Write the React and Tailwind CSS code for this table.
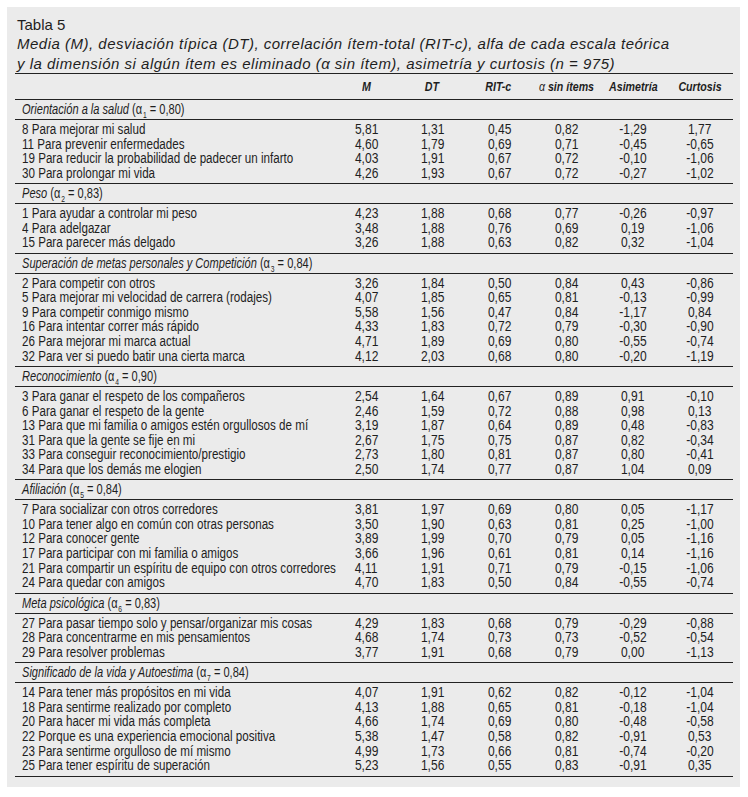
import React from "react";

const sections = [
  {
    name: "Orientación a la salud",
    sub: "1",
    alpha: "0,80",
    rows: [
      ["8 Para mejorar mi salud", "5,81", "1,31", "0,45", "0,82", "-1,29", "1,77"],
      ["11 Para prevenir enfermedades", "4,60", "1,79", "0,69", "0,71", "-0,45", "-0,65"],
      ["19 Para reducir la probabilidad de padecer un infarto", "4,03", "1,91", "0,67", "0,72", "-0,10", "-1,06"],
      ["30 Para prolongar mi vida", "4,26", "1,93", "0,67", "0,72", "-0,27", "-1,02"],
    ],
  },
  {
    name: "Peso",
    sub: "2",
    alpha: "0,83",
    rows: [
      ["1 Para ayudar a controlar mi peso", "4,23", "1,88", "0,68", "0,77", "-0,26", "-0,97"],
      ["4 Para adelgazar", "3,48", "1,88", "0,76", "0,69", "0,19", "-1,06"],
      ["15 Para parecer más delgado", "3,26", "1,88", "0,63", "0,82", "0,32", "-1,04"],
    ],
  },
  {
    name: "Superación de metas personales y Competición",
    sub: "3",
    alpha: "0,84",
    rows: [
      ["2 Para competir con otros", "3,26", "1,84", "0,50", "0,84", "0,43", "-0,86"],
      ["5 Para mejorar mi velocidad de carrera (rodajes)", "4,07", "1,85", "0,65", "0,81", "-0,13", "-0,99"],
      ["9 Para competir conmigo mismo", "5,58", "1,56", "0,47", "0,84", "-1,17", "0,84"],
      ["16 Para intentar correr más rápido", "4,33", "1,83", "0,72", "0,79", "-0,30", "-0,90"],
      ["26 Para mejorar mi marca actual", "4,71", "1,89", "0,69", "0,80", "-0,55", "-0,74"],
      ["32 Para ver si puedo batir una cierta marca", "4,12", "2,03", "0,68", "0,80", "-0,20", "-1,19"],
    ],
  },
  {
    name: "Reconocimiento",
    sub: "4",
    alpha: "0,90",
    rows: [
      ["3 Para ganar el respeto de los compañeros", "2,54", "1,64", "0,67", "0,89", "0,91", "-0,10"],
      ["6 Para ganar el respeto de la gente", "2,46", "1,59", "0,72", "0,88", "0,98", "0,13"],
      ["13 Para que mi familia o amigos estén orgullosos de mí", "3,19", "1,87", "0,64", "0,89", "0,48", "-0,83"],
      ["31 Para que la gente se fije en mi", "2,67", "1,75", "0,75", "0,87", "0,82", "-0,34"],
      ["33 Para conseguir reconocimiento/prestigio", "2,73", "1,80", "0,81", "0,87", "0,80", "-0,41"],
      ["34 Para que los demás me elogien", "2,50", "1,74", "0,77", "0,87", "1,04", "0,09"],
    ],
  },
  {
    name: "Afiliación",
    sub: "5",
    alpha: "0,84",
    rows: [
      ["7 Para socializar con otros corredores", "3,81", "1,97", "0,69", "0,80", "0,05", "-1,17"],
      ["10 Para tener algo en común con otras personas", "3,50", "1,90", "0,63", "0,81", "0,25", "-1,00"],
      ["12 Para conocer gente", "3,89", "1,99", "0,70", "0,79", "0,05", "-1,16"],
      ["17 Para participar con mi familia o amigos", "3,66", "1,96", "0,61", "0,81", "0,14", "-1,16"],
      ["21 Para compartir un espíritu de equipo con otros corredores", "4,11", "1,91", "0,71", "0,79", "-0,15", "-1,06"],
      ["24 Para quedar con amigos", "4,70", "1,83", "0,50", "0,84", "-0,55", "-0,74"],
    ],
  },
  {
    name: "Meta psicológica",
    sub: "6",
    alpha: "0,83",
    rows: [
      ["27 Para pasar tiempo solo y pensar/organizar mis cosas", "4,29", "1,83", "0,68", "0,79", "-0,29", "-0,88"],
      ["28 Para concentrarme en mis pensamientos", "4,68", "1,74", "0,73", "0,73", "-0,52", "-0,54"],
      ["29 Para resolver problemas", "3,77", "1,91", "0,68", "0,79", "0,00", "-1,13"],
    ],
  },
  {
    name: "Significado de la vida y Autoestima",
    sub: "7",
    alpha: "0,84",
    rows: [
      ["14 Para tener más propósitos en mi vida", "4,07", "1,91", "0,62", "0,82", "-0,12", "-1,04"],
      ["18 Para sentirme realizado por completo", "4,13", "1,88", "0,65", "0,81", "-0,18", "-1,04"],
      ["20 Para hacer mi vida más completa", "4,66", "1,74", "0,69", "0,80", "-0,48", "-0,58"],
      ["22 Porque es una experiencia emocional positiva", "5,38", "1,47", "0,58", "0,82", "-0,91", "0,53"],
      ["23 Para sentirme orgulloso de mí mismo", "4,99", "1,73", "0,66", "0,81", "-0,74", "-0,20"],
      ["25 Para tener espíritu de superación", "5,23", "1,56", "0,55", "0,83", "-0,91", "0,35"],
    ],
  },
];

const headers = ["M", "DT", "RIT-c", null, "Asimetría", "Curtosis"];

export default function App() {
  return (
    <div className="w-[748px] h-[797px] bg-white pt-[7px] pl-[7px] text-[#1e1e1e]">
      <div className="w-[733px] h-[780px] bg-[#ebebeb] px-[8px] pt-[8px]">
        <div className="pl-[2px] font-['Liberation_Sans',Arial,sans-serif]">
          <div className="text-[15px] leading-[19px]">Tabla 5</div>
          <div className="text-[15px] leading-[19.5px] italic tracking-[0.5px] whitespace-nowrap">
            <div>Media (M), desviación típica (DT), correlación ítem-total (RIT-c), alfa de cada escala teórica</div>
            <div>y la dimensión si algún ítem es eliminado (α sin ítem), asimetría y curtosis (n = 975)</div>
          </div>
        </div>
        <div className="w-[718px] border-t border-[#222] font-['Liberation_Sans',Arial,sans-serif] text-[14px]">
          <div className="flex h-[26px] items-center border-b border-[#222] text-[13.3px]">
            <div className="w-[318px]" />
            {headers.map((h, i) => (
              <div key={i} className="flex-1 text-center font-bold italic whitespace-nowrap">
                <span className="inline-block scale-x-[0.8]">
                  {h === null ? (
                    <>
                      <span className="font-normal">α</span> sin ítems
                    </>
                  ) : (
                    h
                  )}
                </span>
              </div>
            ))}
          </div>
          {sections.map((s, si) => (
            <div key={si}>
              <div className="flex h-[20px] items-center border-b border-[#222] pl-[7px] whitespace-nowrap">
                <span className="inline-block origin-left scale-x-[0.79]">
                  <span className="italic">{s.name}</span>
                  <span>&nbsp;(α</span>
                  <span className="text-[8.5px] relative top-[4px] ml-[1px]">{s.sub}</span>
                  <span>&nbsp;= {s.alpha})</span>
                </span>
              </div>
              <div className="border-b border-[#222] pt-[2px] pb-[3px]">
                {s.rows.map((r, ri) => (
                  <div key={ri} className="flex leading-[14.55px] h-[14.55px]">
                    <div className="w-[318px] pl-[7px] whitespace-nowrap">
                      <span className="inline-block origin-left scale-x-[0.83]">{r[0]}</span>
                    </div>
                    {r.slice(1).map((v, vi) => (
                      <div key={vi} className="flex-1 text-center">
                        <span className="inline-block scale-x-[0.86]">{v}</span>
                      </div>
                    ))}
                  </div>
                ))}
              </div>
            </div>
          ))}
        </div>
      </div>
    </div>
  );
}
